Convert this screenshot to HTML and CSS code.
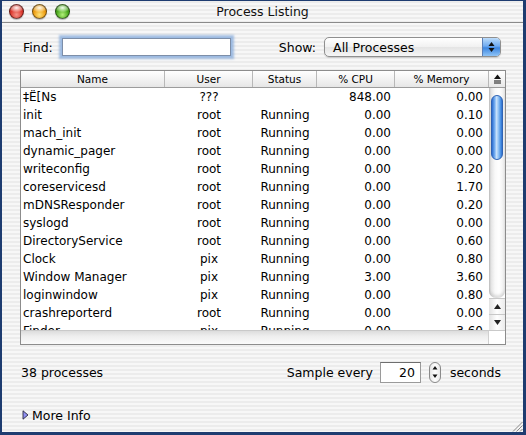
FILE: index.html
```html
<!DOCTYPE html>
<html lang="en">
<head>
    <meta charset="UTF-8">
    <meta name="viewport" content="width=device-width, initial-scale=1.0">
    <title>Process Listing</title>
    <link rel="stylesheet" href="styles.css">
</head>
<body>
    <div class="window">
        <div class="titlebar">
            <div class="lights">
                <span class="light red"></span>
                <span class="light yellow"></span>
                <span class="light green"></span>
            </div>
            <div class="title">Process Listing</div>
        </div>

        <div class="content">
            <div class="toolbar">
                <span class="find-label">Find:</span>
                <input class="find-field" type="text">
                <span class="show-label">Show:</span>
                <div class="popup">
                    <span class="popup-text">All Processes</span>
                    <span class="popup-arrows">
                        <svg width="7" height="12" viewBox="0 0 7 12"><polygon points="3.5,1 6.5,5 0.5,5" fill="#111"/><polygon points="3.5,11 6.5,7 0.5,7" fill="#111"/></svg>
                    </span>
                </div>
            </div>

            <div class="table-frame">
                <div class="table-main">
                    <div class="table-cols">
                        <div class="row header">
                            <div>Name</div>
                            <div>User</div>
                            <div>Status</div>
                            <div>% CPU</div>
                            <div>% Memory</div>
                        </div>
                        <div class="table-body">
                            <div class="row"><div class="c-name">‡Ë[Ns</div><div class="c-user">???</div><div class="c-status"></div><div class="c-cpu">848.00</div><div class="c-mem">0.00</div></div>
                            <div class="row"><div class="c-name">init</div><div class="c-user">root</div><div class="c-status">Running</div><div class="c-cpu">0.00</div><div class="c-mem">0.10</div></div>
                            <div class="row"><div class="c-name">mach_init</div><div class="c-user">root</div><div class="c-status">Running</div><div class="c-cpu">0.00</div><div class="c-mem">0.00</div></div>
                            <div class="row"><div class="c-name">dynamic_pager</div><div class="c-user">root</div><div class="c-status">Running</div><div class="c-cpu">0.00</div><div class="c-mem">0.00</div></div>
                            <div class="row"><div class="c-name">writeconfig</div><div class="c-user">root</div><div class="c-status">Running</div><div class="c-cpu">0.00</div><div class="c-mem">0.20</div></div>
                            <div class="row"><div class="c-name">coreservicesd</div><div class="c-user">root</div><div class="c-status">Running</div><div class="c-cpu">0.00</div><div class="c-mem">1.70</div></div>
                            <div class="row"><div class="c-name">mDNSResponder</div><div class="c-user">root</div><div class="c-status">Running</div><div class="c-cpu">0.00</div><div class="c-mem">0.20</div></div>
                            <div class="row"><div class="c-name">syslogd</div><div class="c-user">root</div><div class="c-status">Running</div><div class="c-cpu">0.00</div><div class="c-mem">0.00</div></div>
                            <div class="row"><div class="c-name">DirectoryService</div><div class="c-user">root</div><div class="c-status">Running</div><div class="c-cpu">0.00</div><div class="c-mem">0.60</div></div>
                            <div class="row"><div class="c-name">Clock</div><div class="c-user">pix</div><div class="c-status">Running</div><div class="c-cpu">0.00</div><div class="c-mem">0.80</div></div>
                            <div class="row"><div class="c-name">Window Manager</div><div class="c-user">pix</div><div class="c-status">Running</div><div class="c-cpu">3.00</div><div class="c-mem">3.60</div></div>
                            <div class="row"><div class="c-name">loginwindow</div><div class="c-user">pix</div><div class="c-status">Running</div><div class="c-cpu">0.00</div><div class="c-mem">0.80</div></div>
                            <div class="row"><div class="c-name">crashreporterd</div><div class="c-user">root</div><div class="c-status">Running</div><div class="c-cpu">0.00</div><div class="c-mem">0.00</div></div>
                            <div class="row"><div class="c-name">Finder</div><div class="c-user">pix</div><div class="c-status">Running</div><div class="c-cpu">0.00</div><div class="c-mem">3.60</div></div>
                        </div>
                    </div>
                    <div class="vscroll">
                        <div class="corner">
                            <svg width="9" height="10" viewBox="0 0 9 10"><polygon points="4.5,0.5 8,5 1,5" fill="#111"/><rect x="1" y="6.5" width="7" height="1" fill="#111"/><rect x="1" y="8.5" width="7" height="1" fill="#111"/></svg>
                        </div>
                        <div class="track">
                            <div class="thumb"></div>
                        </div>
                        <div class="arrow">
                            <svg width="7" height="5" viewBox="0 0 7 5"><polygon points="3.5,0 7,5 0,5" fill="#222"/></svg>
                        </div>
                        <div class="arrow">
                            <svg width="7" height="5" viewBox="0 0 7 5"><polygon points="0,0 7,0 3.5,5" fill="#222"/></svg>
                        </div>
                    </div>
                </div>
                <div class="hscroll">
                    <div class="hbar"></div>
                    <div class="hcorner"></div>
                </div>
            </div>

            <div class="status">
                <span class="count">38 processes</span>
                <span class="sample-label">Sample every</span>
                <input class="sample-field" type="text" value="20">
                <div class="stepper">
                    <svg width="6" height="14" viewBox="0 0 6 14"><polygon points="3,1 5.5,4.5 0.5,4.5" fill="#111"/><polygon points="3,13 5.5,9.5 0.5,9.5" fill="#111"/></svg>
                </div>
                <span class="seconds">seconds</span>
            </div>

            <div class="more-info">
                <svg class="disclosure" width="7" height="10" viewBox="0 0 7 10"><polygon points="1,0.8 6,5 1,9.2" fill="#8f8ff2" stroke="#2a2a40" stroke-width="0.9"/></svg>
                <span>More Info</span>
            </div>
        </div>

        <svg class="grip" width="12" height="12" viewBox="0 0 12 12">
            <line x1="11.5" y1="2" x2="2" y2="11.5" stroke="#8a8a8a"/>
            <line x1="11.5" y1="5.5" x2="5.5" y2="11.5" stroke="#8a8a8a"/>
            <line x1="11.5" y1="9" x2="9" y2="11.5" stroke="#8a8a8a"/>
        </svg>
    </div>
</body>
</html>
```

FILE: styles.css
```css
body {
    margin: 0;
    background-color: #1e3c70;
    font-family: "DejaVu Sans", sans-serif;
    font-size: 12px;
    color: #000;
}
.window {
    position: relative;
    margin: 1px 0 0 2px;
    width: 521px;
    height: 431px;
    overflow: hidden;
    background: repeating-linear-gradient(to bottom, #ececec 0, #ececec 2px, #f7f7f7 2px, #f7f7f7 4px);
}
.titlebar {
    height: 21px;
    border-bottom: 1px solid #8a8a8a;
    display: flex;
    align-items: center;
    position: relative;
}
.lights {
    display: flex;
    gap: 8px;
    margin-left: 7px;
}
.light {
    width: 13px;
    height: 13px;
    border-radius: 50%;
    border: 1px solid rgba(0, 0, 0, 0.5);
    box-shadow: 0 1px 1px rgba(0, 0, 0, 0.25);
}
.red {
    background: radial-gradient(ellipse 60% 35% at 50% 22%, #fff6f4 0, rgba(255, 220, 215, 0.4) 70%, transparent 100%),
        radial-gradient(circle at 50% 75%, #f59488 0, #dc3a30 50%, #a3130d 100%);
}
.yellow {
    background: radial-gradient(ellipse 60% 35% at 50% 22%, #fffbef 0, rgba(255, 240, 200, 0.4) 70%, transparent 100%),
        radial-gradient(circle at 50% 75%, #fde27a 0, #ee9e12 50%, #b46a05 100%);
}
.green {
    background: radial-gradient(ellipse 60% 35% at 50% 22%, #f6fff0 0, rgba(220, 250, 200, 0.4) 70%, transparent 100%),
        radial-gradient(circle at 50% 75%, #b3ef7b 0, #4aa81c 50%, #25700b 100%);
}
.title {
    position: absolute;
    left: 0;
    right: 0;
    text-align: center;
    font-size: 12.5px;
    color: #111;
}
.content {
    padding: 0 22px 0 18px;
}
.toolbar {
    display: flex;
    align-items: center;
    height: 20px;
    margin-top: 14px;
}
.find-label {
    margin-left: 3px;
    font-size: 12.5px;
}
.find-field {
    margin: 0 0 0 9px;
    width: 169px;
    height: 18px;
    padding: 0;
    border: 1px solid #7d8ea8;
    box-sizing: border-box;
    background: #fff;
    box-shadow: 0 0 0 1px #9dbbe2, 0 0 2px 3px rgba(110, 155, 214, 0.6);
    outline: none;
}
.show-label {
    margin-left: 48px;
    font-size: 12.5px;
}
.popup {
    margin-left: 8px;
    width: 178px;
    height: 20px;
    box-sizing: border-box;
    border: 1px solid #8f8f8f;
    border-radius: 5px;
    background: linear-gradient(#ffffff, #f1f1f1 50%, #e4e4e4 51%, #f6f6f6);
    display: flex;
    align-items: center;
    box-shadow: 0 1px 1px rgba(0, 0, 0, 0.15);
}
.popup-text {
    flex: 1;
    padding-left: 8px;
    font-size: 12.5px;
}
.popup-arrows {
    width: 17px;
    height: 18px;
    border-radius: 0 4px 4px 0;
    border-left: 1px solid #5a7fb8;
    background: linear-gradient(#bcdcfb, #6eaaf0 45%, #3d86e0 55%, #8fc4f6);
    display: flex;
    align-items: center;
    justify-content: center;
}
.table-frame {
    margin-top: 13px;
    width: 486px;
    height: 275px;
    box-sizing: border-box;
    border: 1px solid #8c8c8c;
    background: #fff;
}
.table-main {
    display: flex;
    height: 259px;
}
.table-cols {
    width: 468px;
}
.row {
    display: grid;
    grid-template-columns: 144px 88px 64px 78px 94px;
    height: 18px;
    line-height: 18px;
    white-space: nowrap;
}
.header {
    height: 16px;
    line-height: 16px;
    font-size: 10.5px;
    border-bottom: 1px solid #9c9c9c;
    background: linear-gradient(#ffffff, #f3f3f3 50%, #e6e6e6);
}
.header div {
    text-align: center;
    border-right: 1px solid #b8b8b8;
}
.table-body {
    height: 242px;
    overflow: hidden;
}
.c-name {
    padding-left: 2px;
}
.c-user, .c-status {
    text-align: center;
}
.c-cpu {
    text-align: right;
    padding-right: 4px;
}
.c-mem {
    text-align: right;
    padding-right: 6px;
}
.vscroll {
    width: 16px;
    display: flex;
    flex-direction: column;
}
.corner {
    height: 16px;
    border-bottom: 1px solid #9c9c9c;
    background: linear-gradient(#ffffff, #e8e8e8);
    display: flex;
    align-items: center;
    justify-content: center;
}
.track {
    height: 210px;
    box-sizing: border-box;
    padding: 7px 2px 0 2px;
    border-radius: 0 0 7px 7px;
    background: linear-gradient(to right, #c4c4c4 0, #e4e4e4 2px, #f9f9f9 6px, #ffffff 10px, #ececec 16px);
    box-shadow: inset 0 -3px 3px rgba(0, 0, 0, 0.12);
}
.thumb {
    height: 65px;
    box-sizing: border-box;
    border: 1px solid #2f63b4;
    border-radius: 7px;
    background: linear-gradient(to right, #2b6cd0 0, #6fa9ef 25%, #c6e0fb 45%, #9fcaf6 60%, #4f95e6 85%, #2f6fce 100%);
}
.arrow {
    height: 16px;
    display: flex;
    align-items: center;
    justify-content: center;
    background: linear-gradient(to right, #e2e2e2, #ffffff 50%, #ececec);
    border-top: 1px solid #c8c8c8;
    box-sizing: border-box;
}
.hscroll {
    display: flex;
    height: 14px;
}
.hbar {
    flex: 1;
    border-top: 1px solid #c9c9c9;
    background: linear-gradient(#dcdcdc, #eeeeee 40%, #fafafa);
}
.hcorner {
    width: 16px;
    background: #fff;
    border-top: 1px solid #c9c9c9;
    border-left: 1px solid #d0d0d0;
}
.status {
    display: flex;
    align-items: center;
    height: 22px;
    margin-top: 16px;
}
.count {
    margin-left: 1px;
    font-size: 12.5px;
}
.sample-label {
    margin-left: auto;
    font-size: 12.5px;
}
.sample-field {
    margin: 0 0 0 7px;
    width: 41px;
    height: 21px;
    box-sizing: border-box;
    padding: 0 5px 0 0;
    border: 1px solid #9a9a9a;
    border-top-color: #6e6e6e;
    background: #fff;
    text-align: right;
    font-family: "DejaVu Sans", sans-serif;
    font-size: 12.5px;
    outline: none;
}
.stepper {
    margin-left: 8px;
    width: 12px;
    height: 21px;
    box-sizing: border-box;
    border: 1px solid #8a8a8a;
    border-radius: 6px;
    background: linear-gradient(to right, #e4e4e4, #ffffff 50%, #e8e8e8);
    display: flex;
    align-items: center;
    justify-content: center;
}
.seconds {
    margin-left: 9px;
    font-size: 12.5px;
}
.more-info {
    display: flex;
    align-items: center;
    height: 18px;
    margin-top: 23px;
    font-size: 12.5px;
}
.disclosure {
    margin: 0 3px 0 2px;
}
.grip {
    position: absolute;
    right: 0;
    bottom: 0;
}
```
